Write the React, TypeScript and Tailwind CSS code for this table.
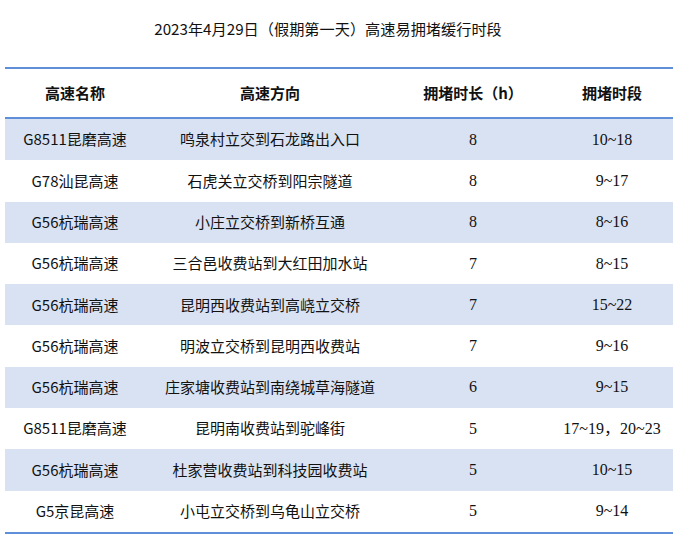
const ROWS: [string, string, string, string][] = [
  ['G8511昆磨高速', '鸣泉村立交到石龙路出入口', '8', '10~18'],
  ['G78汕昆高速', '石虎关立交桥到阳宗隧道', '8', '9~17'],
  ['G56杭瑞高速', '小庄立交桥到新桥互通', '8', '8~16'],
  ['G56杭瑞高速', '三合邑收费站到大红田加水站', '7', '8~15'],
  ['G56杭瑞高速', '昆明西收费站到高峣立交桥', '7', '15~22'],
  ['G56杭瑞高速', '明波立交桥到昆明西收费站', '7', '9~16'],
  ['G56杭瑞高速', '庄家塘收费站到南绕城草海隧道', '6', '9~15'],
  ['G8511昆磨高速', '昆明南收费站到驼峰街', '5', '17~19，20~23'],
  ['G56杭瑞高速', '杜家营收费站到科技园收费站', '5', '10~15'],
  ['G5京昆高速', '小屯立交桥到乌龟山立交桥', '5', '9~14'],
]

const cjk = "font-['Noto_Sans_CJK_SC',sans-serif]"
const serif = "font-['Liberation_Serif','Noto_Sans_CJK_SC',serif]"

export default function App() {
  return (
    <div className={`w-[688px] h-[536px] bg-white text-[#111] ${cjk}`}>
      <div className="w-[656px] pt-[16px] h-[67px] text-center text-[15.2px] leading-[24px]">
        2023年4月29日（假期第一天）高速易拥堵缓行时段
      </div>
      <div className="ml-[5px] w-[668px] border-t-2 border-b-2 border-[#5f8fd9]">
        <div className="flex h-[50px] items-center border-b-2 border-[#5f8fd9] text-[15px] font-bold">
          <div className="w-[140px] text-center">高速名称</div>
          <div className="w-[250px] text-center">高速方向</div>
          <div className="w-[156px] text-center">拥堵时长（h）</div>
          <div className="w-[122px] text-center">拥堵时段</div>
        </div>
        {ROWS.map((r, i) => (
          <div
            key={i}
            className={`flex h-[41.3px] items-center text-[15px] ${i % 2 === 0 ? 'bg-[#d9e2f3]' : 'bg-white'}`}
          >
            <div className="w-[140px] text-center">{r[0]}</div>
            <div className="w-[250px] text-center">{r[1]}</div>
            <div className={`w-[156px] text-center text-[16px] ${serif}`}>{r[2]}</div>
            <div className={`w-[122px] text-center text-[16px] ${serif}`}>{r[3]}</div>
          </div>
        ))}
      </div>
    </div>
  )
}
